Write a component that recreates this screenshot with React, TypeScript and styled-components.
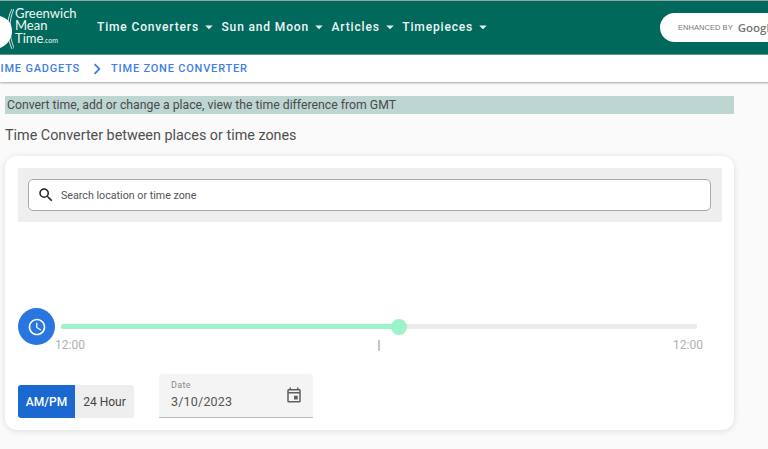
import styled, { createGlobalStyle } from 'styled-components';
import { MdArrowDropDown, MdChevronRight, MdSearch, MdOutlineAccessTime, MdOutlineEvent } from 'react-icons/md';

const GlobalStyle = createGlobalStyle`
  html, body {
    margin: 0;
    height: 449px;
    overflow: hidden;
    background: #fafafa;
    font-family: Roboto, "Liberation Sans", sans-serif;
  }
  * {
    box-sizing: border-box;
  }
`;

const Page = styled.div`
  width: 768px;
  height: 449px;
  overflow: hidden;
`;

const TopBar = styled.header`
  display: flex;
  align-items: center;
  height: 55px;
  background: #00695c;
  border-top: 1px solid #8fa8a4;
  border-bottom: 1px solid #5f9d94;
  overflow: hidden;
`;

const Logo = styled.div`
  display: flex;
  align-items: center;
  width: 97px;
  flex-shrink: 0;
`;

const LogoText = styled.div`
  color: #f2f7f6;
  font-family: Lato, sans-serif;
  font-size: 13px;
  line-height: 12.5px;
  margin-left: 1px;
  margin-top: -2px;
`;

const LogoSmall = styled.span`
  font-size: 7px;
`;

const Nav = styled.nav`
  display: flex;
  align-items: center;
  flex: 1;
  margin-top: -1px;
`;

const NavItem = styled.div`
  display: flex;
  align-items: center;
  color: #eef5f4;
  font-size: 12px;
  font-weight: 500;
  letter-spacing: 0.85px;
  margin-right: 4.5px;

  svg {
    margin-left: 1px;
    margin-right: -1px;
  }
`;

const SearchPill = styled.div`
  display: flex;
  align-items: center;
  gap: 5px;
  width: 140px;
  height: 29px;
  margin-right: -32px;
  padding-left: 18px;
  border-radius: 15px 0 0 15px;
  background: #fff;
  flex-shrink: 0;
  white-space: nowrap;
`;

const EnhancedBy = styled.span`
  color: #777;
  font-family: "Liberation Sans", sans-serif;
  font-size: 7.5px;
  letter-spacing: 0.05px;
`;

const GoogleWord = styled.span`
  color: #757575;
  font-family: "Open Sans", sans-serif;
  font-size: 11.5px;
  font-weight: 600;
`;

const Breadcrumbs = styled.div`
  display: flex;
  align-items: center;
  height: 27px;
  margin-left: -7px;
  background: #fff;
  color: #3f80e0;
  font-size: 11px;
  font-weight: 500;
  letter-spacing: 0.8px;
  box-shadow: 7px 1px 2px rgba(0, 0, 0, 0.35);
`;

const Crumb = styled.span`
  white-space: nowrap;
`;

const CrumbArrow = styled.span`
  display: flex;
  margin: 0 3px 0 6px;
  font-size: 22px;
`;

const Main = styled.main`
  padding: 14px 34px 0 5px;
`;

const Notice = styled.div`
  height: 18px;
  padding-left: 2px;
  background: #bdd6d2;
  color: #4a4a4a;
  font-size: 12.25px;
  line-height: 18px;
`;

const Heading = styled.h1`
  margin: 12px 0 10px;
  color: #4f4f4f;
  font-size: 14.35px;
  font-weight: 400;
  line-height: 20px;
`;

const Card = styled.section`
  height: 274px;
  padding: 12px 12px 0 13px;
  border-radius: 12px;
  background: #fff;
  box-shadow: 0 1px 6px rgba(0, 0, 0, 0.12);
`;

const SearchPanel = styled.div`
  height: 54px;
  padding: 11px 11px 11px 10px;
  background: #eee;
`;

const SearchBox = styled.div`
  display: flex;
  align-items: center;
  height: 32px;
  padding-left: 8px;
  border: 1px solid #a9a9a9;
  border-radius: 5px;
  background: #fff;
  color: #222;
  font-size: 18px;
`;

const SearchHint = styled.span`
  margin-left: 6px;
  color: #555;
  font-size: 10.7px;
`;

const SliderRow = styled.div`
  display: flex;
  margin-top: 86px;
  height: 50px;
`;

const ClockButton = styled.div`
  display: flex;
  align-items: center;
  justify-content: center;
  width: 37px;
  height: 37px;
  border-radius: 50%;
  background: #2a76e0;
  color: #fff;
  font-size: 20px;
  flex-shrink: 0;
`;

const SliderColumn = styled.div`
  width: 648px;
`;

const Track = styled.div`
  position: relative;
  width: 636px;
  height: 5px;
  margin: 16px 0 0 6px;
  border-radius: 3px;
  background: #ebebeb;
`;

const TrackFill = styled.div`
  height: 100%;
  border-radius: 3px 0 0 3px;
  background: #9df3c9;
`;

const Thumb = styled.div`
  position: absolute;
  top: -5px;
  width: 16px;
  height: 16px;
  border-radius: 50%;
  background: #9df3c9;
`;

const TimeScale = styled.div`
  display: flex;
  justify-content: space-between;
  align-items: center;
  height: 16px;
  margin-top: 8px;
  color: #b0b0b0;
  font-size: 12px;
`;

const TimeTick = styled.span`
  width: 2px;
  height: 11px;
  background: #c4c4c4;
`;

const ControlRow = styled.div`
  display: flex;
  align-items: flex-end;
  gap: 25px;
  margin-top: 16px;
`;

const FormatToggle = styled.div`
  display: flex;
  height: 33px;
  border-radius: 3px;
  overflow: hidden;
`;

const FormatOption = styled.div<{ $active?: boolean }>`
  display: flex;
  align-items: center;
  justify-content: center;
  width: ${({ $active }) => ($active ? '57px' : '59px')};
  background: ${({ $active }) => ($active ? '#1a68d0' : '#eee')};
  color: ${({ $active }) => ($active ? '#fff' : '#444')};
  font-size: 12px;
  font-weight: ${({ $active }) => ($active ? 500 : 400)};
`;

const DateField = styled.div`
  display: flex;
  align-items: center;
  justify-content: space-between;
  width: 154px;
  height: 44px;
  padding: 0 10px 2px 12px;
  border-bottom: 1px solid #bbb;
  border-radius: 3px 3px 0 0;
  background: #f4f4f4;
`;

const DateLabel = styled.div`
  color: #8a8a8a;
  font-size: 9px;
  line-height: 12px;
  letter-spacing: 0.3px;
`;

const DateValue = styled.div`
  margin-top: 2px;
  color: #555;
  font-size: 12.5px;
  line-height: 17px;
  letter-spacing: 0.2px;
`;

const DateIcon = styled.span`
  display: flex;
  margin-top: 1px;
  color: #5f5f5f;
  font-size: 18px;
`;

const navItems = ['Time Converters', 'Sun and Moon', 'Articles', 'Timepieces'];

const sliderPercent = 53.1;

export default function App() {
  return (
    <Page>
      <GlobalStyle />
      <TopBar>
        <Logo>
          <svg width="14" height="44" viewBox="0 0 14 44">
            <path d="M0 10 C7 12 12 17 12 25 C12 33 7 39 0 42 Z" fill="#fff" />
            <path d="M12 3 C6 14 6 30 12 43" fill="none" stroke="#fff" strokeWidth="0.8" />
            <path d="M14 3 C8.5 14 8.5 30 14.5 43" fill="none" stroke="#fff" strokeWidth="0.8" />
          </svg>
          <LogoText>
            Greenwich
            <br />
            Mean
            <br />
            Time<LogoSmall>.com</LogoSmall>
          </LogoText>
        </Logo>
        <Nav>
          {navItems.map((item) => (
            <NavItem key={item}>
              {item}
              <MdArrowDropDown size={18} />
            </NavItem>
          ))}
        </Nav>
        <SearchPill>
          <EnhancedBy>ENHANCED BY</EnhancedBy>
          <GoogleWord>Google</GoogleWord>
        </SearchPill>
      </TopBar>

      <Breadcrumbs>
        <Crumb>TIME GADGETS</Crumb>
        <CrumbArrow>
          <MdChevronRight />
        </CrumbArrow>
        <Crumb>TIME ZONE CONVERTER</Crumb>
      </Breadcrumbs>

      <Main>
        <Notice>Convert time, add or change a place, view the time difference from GMT</Notice>
        <Heading>Time Converter between places or time zones</Heading>
        <Card>
          <SearchPanel>
            <SearchBox>
              <MdSearch />
              <SearchHint>Search location or time zone</SearchHint>
            </SearchBox>
          </SearchPanel>

          <SliderRow>
            <ClockButton>
              <MdOutlineAccessTime />
            </ClockButton>
            <SliderColumn>
              <Track>
                <TrackFill style={{ width: `${sliderPercent}%` }} />
                <Thumb style={{ left: `calc(${sliderPercent}% - 8px)` }} />
              </Track>
              <TimeScale>
                <span>12:00</span>
                <TimeTick />
                <span>12:00</span>
              </TimeScale>
            </SliderColumn>
          </SliderRow>

          <ControlRow>
            <FormatToggle>
              <FormatOption $active>AM/PM</FormatOption>
              <FormatOption>24 Hour</FormatOption>
            </FormatToggle>
            <DateField>
              <div>
                <DateLabel>Date</DateLabel>
                <DateValue>3/10/2023</DateValue>
              </div>
              <DateIcon>
                <MdOutlineEvent />
              </DateIcon>
            </DateField>
          </ControlRow>
        </Card>
      </Main>
    </Page>
  );
}
